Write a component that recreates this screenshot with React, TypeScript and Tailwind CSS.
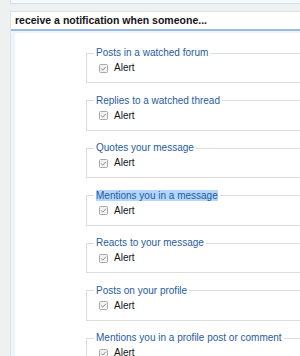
import React from "react";

const options = [
  "Posts in a watched forum",
  "Replies to a watched thread",
  "Quotes your message",
  "Mentions you in a message",
  "Reacts to your message",
  "Posts on your profile",
  "Mentions you in a profile post or comment",
];

function CheckBox() {
  return (
    <svg width="9" height="9" viewBox="0 0 9 9" className="shrink-0">
      <rect x="0.5" y="0.5" width="8" height="8" rx="1" fill="#f3f3f3" stroke="#a9a9a9" />
      <path d="M2.2 4.6 L3.8 6.1 L6.9 2.8" fill="none" stroke="#8a8a8a" strokeWidth="1" />
    </svg>
  );
}

export default function App() {
  return (
    <div
      className="w-[300px] h-[356px] overflow-hidden bg-[#edf1f0] pl-[10px]"
      style={{ fontFamily: "'Liberation Sans', Arial, sans-serif" }}
    >
      <div className="w-[330px]">
        {/* previous block edge */}
        <div className="h-[4px] bg-[#f6f8fc] border-l border-b border-[#d5dde8]" />

        <div className="mt-[7px] border-l border-t border-[#dbe3ec]">
          <div className="h-[19px] bg-white border-b-2 border-[#9cb9e3] pl-[4px] flex items-center">
            <h3 className="text-[10.5px] font-bold text-[#141414] leading-none">
              receive a notification when someone...
            </h3>
          </div>

          <div className="bg-[#eef4fb] pt-[2px] pl-[4px]">
            <div className="bg-white pl-[71px] pt-[14px] pb-[20px] flex flex-col gap-[11.5px]">
              {options.map((label, i) => (
                <fieldset key={label} className="border border-[#dcdcdc] px-[7px] pb-[8px]">
                  <legend className="px-[2px] text-[10px] leading-[12px] text-[#1f5c9c]">
                    {i === 3 ? <span className="bg-[#b4d5fe]">{label}</span> : label}
                  </legend>
                  <label className="mt-[3px] ml-[5px] flex items-center gap-[6px] h-[12px] text-[10px] leading-[12px] text-[#141414]">
                    <CheckBox />
                    Alert
                  </label>
                </fieldset>
              ))}
            </div>
          </div>
        </div>
      </div>
    </div>
  );
}
